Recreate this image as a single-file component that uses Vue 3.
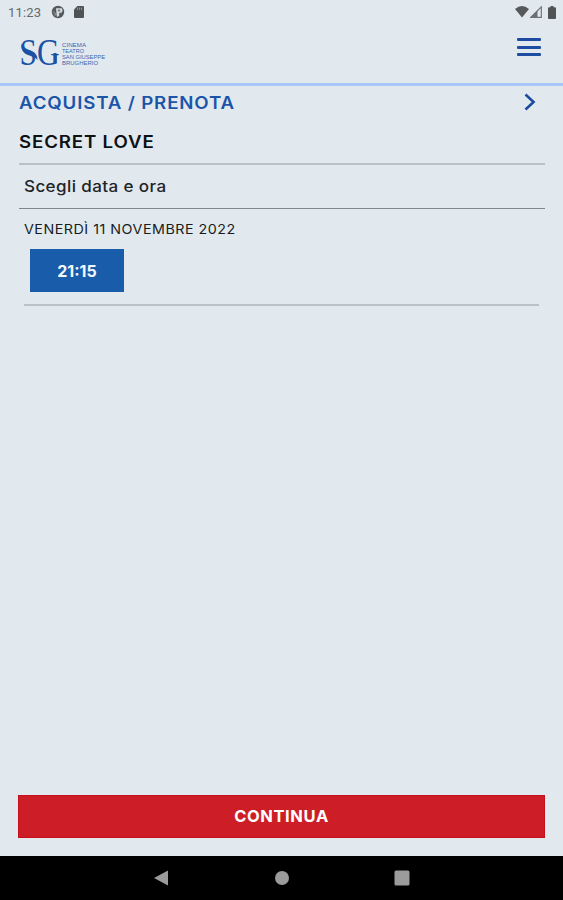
<script setup>
import { ref } from "vue";

const times = ref(["21:15"]);
const selected = ref("21:15");
</script>

<template>
  <div class="screen">
    <div class="status-bar">
      <span class="clock">11:23</span>
      <svg class="status-app" viewBox="0 0 14 14">
        <circle cx="7" cy="7" r="6.2" fill="#55595c" />
        <path d="M5 3.2h5.8l.8 2.2-1 2.4H8.2v2.7l-1.4 1.3-1-.3z" fill="#d5dce0" />
        <path d="M6.8 4.6h2.4v1.8H6.8z" fill="#777b7e" />
        <path d="M2.2 6.5l2 2v2" stroke="#aeb4b8" stroke-width=".9" fill="none" />
      </svg>
      <svg class="status-sd" viewBox="0 0 10 12">
        <path d="M3.4 0H9a1 1 0 0 1 1 1v10a1 1 0 0 1-1 1H1a1 1 0 0 1-1-1V3.4z" fill="#505356" />
        <path d="M3.6 1.6v2.2M5.6 1.6v2.2M7.6 1.6v2.2" stroke="#a4aaae" stroke-width=".8" />
      </svg>
      <div class="status-right">
        <svg class="wifi" viewBox="0 0 14 12">
          <path d="M0 3Q7 -3 14 3L7 11.5z" fill="#55595c" />
        </svg>
        <svg class="signal" viewBox="0 0 12 12">
          <path d="M11.3 .9V11.3H.9z" fill="none" stroke="#6f7477" stroke-width="1.2" />
          <path d="M0 12L7.5 4.5V12z" fill="#6a6f72" />
        </svg>
        <svg class="battery" viewBox="0 0 8 13">
          <path d="M2.5 0h3v1.3H7a1 1 0 0 1 1 1V12a1 1 0 0 1-1 1H1a1 1 0 0 1-1-1V2.3a1 1 0 0 1 1-1h1.5z" fill="#505356" />
        </svg>
      </div>
    </div>

    <header class="header">
      <svg class="logo" viewBox="0 0 90 48">
        <text class="logo-mark" x="-.5" y="35.5" textLength="40" lengthAdjust="spacingAndGlyphs">SG</text>
        <path d="M1.5 14.5C2 19.500 6 20 10.500 21.500C15 23 17.500 26 17.500 31C15.500 28 12 27.500 8 26C3 24 .5 20 1.500 14.500z" fill="#1b52a3" />
        <path d="M33.500 24h3v10.500h-3z" fill="#1b52a3" />
        <g class="logo-name">
          <text x="42" y="17.6" textLength="24" lengthAdjust="spacingAndGlyphs">CINEMA</text>
          <text x="42" y="23.6" textLength="22" lengthAdjust="spacingAndGlyphs">TEATRO</text>
          <text x="42" y="29.6" textLength="43" lengthAdjust="spacingAndGlyphs">SAN GIUSEPPE</text>
          <text x="42" y="35.6" textLength="36" lengthAdjust="spacingAndGlyphs">BRUGHERIO</text>
        </g>
      </svg>
      <button class="menu" aria-label="Menu">
        <span></span>
        <span></span>
        <span></span>
      </button>
    </header>

    <main class="content">
      <div class="title-row">
        <h1 class="wide">ACQUISTA / PRENOTA</h1>
        <svg class="chevron" viewBox="0 0 12 18">
          <path d="M1.5 1.5L9.6 9L1.5 16.5" fill="none" stroke="#1b49a0" stroke-width="2.5" />
        </svg>
      </div>
      <h2><span class="wide">SECRET LOVE</span></h2>
      <div class="choose"><span class="wide">Scegli data e ora</span></div>
      <section class="day">
        <div class="date"><span class="wide">VENERDÌ 11 NOVEMBRE 2022</span></div>
        <button
          v-for="time in times"
          :key="time"
          class="time"
          @click="selected = time"
        >{{ time }}</button>
      </section>
    </main>

    <button class="continue">CONTINUA</button>

    <nav class="nav-bar">
      <svg viewBox="0 0 16 16"><path d="M0 8L14 .5v15z" fill="#9b9b9b" /></svg>
      <svg viewBox="0 0 16 16"><circle cx="8" cy="8" r="7" fill="#9b9b9b" /></svg>
      <svg viewBox="0 0 16 16"><rect x=".5" y=".5" width="15" height="15" rx="1.5" fill="#9b9b9b" /></svg>
    </nav>
  </div>
</template>

<style>
body {
  margin: 0;
  background: #e1e9ef;
}
</style>

<style scoped>
.screen {
  height: 900px;
  display: flex;
  flex-direction: column;
  background: #e1e9ef;
  font-family: Inter, "Liberation Sans", sans-serif;
  overflow: hidden;
}

button {
  border: none;
  border-radius: 0;
  font-family: inherit;
  cursor: pointer;
}

.wide {
  display: inline-block;
  transform: scaleX(1.1);
  transform-origin: left center;
}

.status-bar {
  height: 24px;
  flex-shrink: 0;
  display: flex;
  align-items: center;
  padding: 0 7px 0 8px;
}

.clock {
  width: 43px;
  font-family: Roboto, sans-serif;
  font-size: 13px;
  color: #66696c;
  letter-spacing: 0.2px;
}

.status-app {
  width: 14px;
  height: 14px;
}

.status-sd {
  width: 10px;
  height: 12px;
  margin-left: 9px;
}

.status-right {
  margin-left: auto;
  display: flex;
  align-items: center;
}

.wifi {
  width: 14px;
  height: 12px;
}

.signal {
  width: 12px;
  height: 12px;
  margin-left: 1px;
}

.battery {
  width: 8px;
  height: 13px;
  margin-left: 6px;
}

.header {
  height: 59px;
  flex-shrink: 0;
  display: flex;
  justify-content: space-between;
  align-items: flex-start;
  padding: 0 22px 0 20px;
  border-bottom: 3px solid #a9c6fa;
}

.logo {
  width: 90px;
  height: 48px;
  margin-top: 5px;
}

.logo-mark {
  font-family: "Liberation Serif", serif;
  font-size: 37px;
  fill: #1b52a3;
}

.logo-name {
  font-family: "Liberation Sans", sans-serif;
  font-size: 5px;
  fill: #3a68b0;
}

.menu {
  width: 24px;
  height: 18px;
  margin-top: 14px;
  padding: 0;
  background: none;
  display: flex;
  flex-direction: column;
  justify-content: space-between;
}

.menu span {
  width: 24px;
  height: 3px;
  border-radius: 1px;
  background: #1d4da3;
}

.content {
  flex: 1;
  padding: 0 18px 0 19px;
}

.title-row {
  height: 34px;
  display: flex;
  align-items: center;
  justify-content: space-between;
}

h1 {
  margin: 0;
  font-size: 17px;
  font-weight: 600;
  letter-spacing: 0.76px;
  color: #1c54a8;
}

.chevron {
  width: 12px;
  height: 18px;
  margin-right: 9px;
  margin-bottom: 2px;
}

h2 {
  margin: 0;
  height: 43px;
  line-height: 45px;
  font-size: 17px;
  font-weight: 600;
  letter-spacing: 0.75px;
  color: #0d1114;
  border-bottom: 2px solid #bbc2c6;
}

.choose {
  height: 43px;
  line-height: 44px;
  padding-left: 5px;
  font-size: 15.5px;
  font-weight: 500;
  letter-spacing: 0.35px;
  color: #202427;
  border-bottom: 1px solid #7e888d;
}

.day {
  margin: 0 6px 0 5px;
  height: 95px;
  border-bottom: 2px solid #bbc2c6;
}

.date {
  height: 40px;
  line-height: 41px;
  font-size: 13px;
  letter-spacing: 0.45px;
  color: #191d20;
}

.time {
  display: block;
  width: 94px;
  height: 43px;
  margin-left: 6px;
  padding: 0;
  font-size: 16px;
  font-weight: 700;
  color: #f3f8fd;
  background: #195caa;
}

.continue {
  height: 43px;
  flex-shrink: 0;
  margin: 0 18px 18px;
  padding: 0 0 1px;
  font-size: 16.5px;
  font-weight: 700;
  letter-spacing: 0.6px;
  color: #fff;
  background: #cd1e28;
  box-shadow: inset 0 0 0 1px #c6101b;
}

.nav-bar {
  height: 44px;
  flex-shrink: 0;
  display: flex;
  align-items: center;
  justify-content: center;
  gap: 104px;
  background: #000;
}

.nav-bar svg {
  width: 16px;
  height: 16px;
}
</style>
